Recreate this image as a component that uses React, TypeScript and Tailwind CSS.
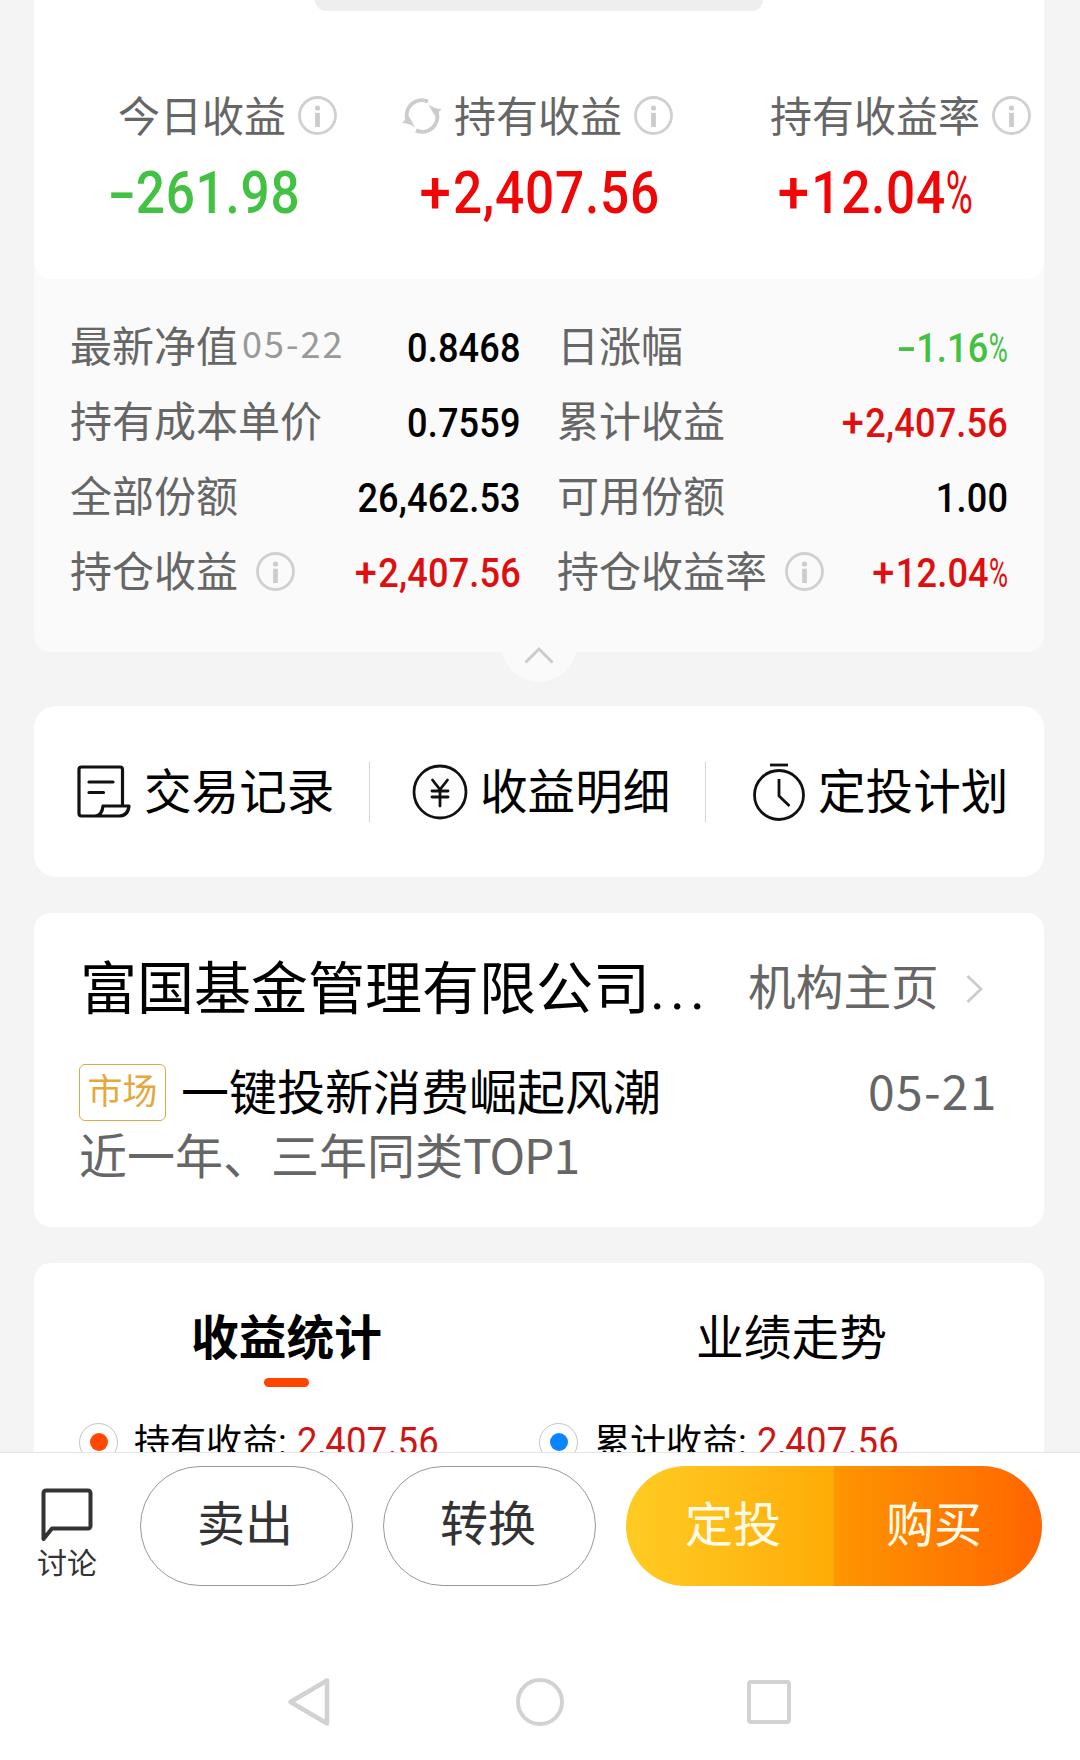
import type { ReactNode } from 'react';
import clsx from 'clsx';

const red = 'text-[#e00f0f]';
const green = 'text-[#43c143]';

const details = [
  { label: '最新净值', date: '05-22', value: '0.8468', color: 'text-black' },
  { label: '日涨幅', value: '-1.16%', color: green },
  { label: '持有成本单价', value: '0.7559', color: 'text-black' },
  { label: '累计收益', value: '+2,407.56', color: red },
  { label: '全部份额', value: '26,462.53', color: 'text-black' },
  { label: '可用份额', value: '1.00', color: 'text-black' },
  { label: '持仓收益', info: true, value: '+2,407.56', color: red },
  { label: '持仓收益率', info: true, value: '+12.04%', color: red },
];

function InfoIcon() {
  return (
    <svg className="h-[39px] w-[39px] shrink-0" viewBox="0 0 39 39" fill="none">
      <circle cx="19.5" cy="19.5" r="18" stroke="#d0d0d0" strokeWidth="2.8" />
      <circle cx="19.5" cy="12" r="2.6" fill="#ccc" />
      <path d="M19.5 16.8V31" stroke="#ccc" strokeWidth="4.8" />
    </svg>
  );
}

function RefreshIcon() {
  return (
    <svg className="h-[36px] w-[40px] shrink-0" viewBox="0 0 40 36" fill="none">
      <path d="M5.5 22A15 15 0 0 1 26 3.6" stroke="#ccc" strokeWidth="4" />
      <path d="M34.5 14A15 15 0 0 1 14 32.4" stroke="#ccc" strokeWidth="4" />
      <path d="M26.5 6.5Q33 11 39.5 11L33 18Q30 13 26.5 6.5Z" fill="#ccc" />
      <path d="M13 29.5Q7 25 0 25L6.5 18Q10 23 13 29.5Z" fill="#ccc" />
    </svg>
  );
}

function RecordIcon() {
  return (
    <svg className="h-[54px] w-[54px] shrink-0" viewBox="0 0 54 54" fill="none" stroke="#111" strokeWidth="3.2" strokeLinejoin="round" strokeLinecap="round">
      <path d="M45.5 41V4.5a2.5 2.5 0 0 0-2.5-2.5H4.5A2.5 2.5 0 0 0 2 4.5V48.5A2.5 2.5 0 0 0 4.5 51H42Q51 51 52 41H26Q25 51 18 51" />
      <path d="M12 17H36M12 27.5H26.5" />
    </svg>
  );
}

function YenIcon() {
  return (
    <svg className="h-[56px] w-[56px] shrink-0" viewBox="0 0 56 56" fill="none" stroke="#111" strokeWidth="2.8" strokeLinecap="round">
      <circle cx="28" cy="28" r="26" />
      <path d="M20.5 16 28 25.5 35.5 16M28 25.5V42M20 27H36M20 33H36" />
    </svg>
  );
}

function TimerIcon() {
  return (
    <svg className="h-[60px] w-[52px] shrink-0" viewBox="0 0 52 60" fill="none" stroke="#111" strokeWidth="2.8">
      <path d="M17 3H35" />
      <circle cx="26" cy="33" r="24.5" />
      <path d="M26 17V34L36.5 44" />
    </svg>
  );
}

// Condensed figures: the sign is drawn wider and the percent mark narrower than the digits.
function Amount({ value, className }: { value: string; className: string }) {
  const sign = /^[+-]/.test(value) ? value[0] : '';
  const percent = value.endsWith('%');
  const digits = value.replace(/[+%-]/g, '');
  return (
    <div className={clsx('scale-x-[0.87] font-[Roboto] font-medium whitespace-nowrap', className)}>
      {sign === '-' && <span className="inline-block w-[0.54em] origin-left scale-x-[1.6]">-</span>}
      {sign === '+' && <span className="inline-block w-[0.65em] origin-left scale-x-[1.1]">+</span>}
      {digits}
      {percent && <span className="inline-block w-[0.54em] origin-left scale-x-[0.72] font-normal">%</span>}
    </div>
  );
}

function Metric({ label, refresh, value, className }: { label: string; refresh?: boolean; value: string; className: string }) {
  return (
    <div className="flex flex-col">
      <div className="flex h-[60px] items-center">
        {refresh && <div className="mr-[12px] -ml-[8px]"><RefreshIcon /></div>}
        <span className="-mt-[5px] text-[42px] leading-[60px] whitespace-nowrap text-[#666]">{label}</span>
        <div className="-mt-px ml-[12px]"><InfoIcon /></div>
      </div>
      <Amount value={value} className={clsx('mt-[17px] origin-left text-[59px] leading-[60px] tracking-[0.015em]', className)} />
    </div>
  );
}

function Shortcut({ icon, label, className }: { icon: ReactNode; label: string; className: string }) {
  return (
    <div className={clsx('flex h-[60px] items-center', className)}>
      {icon}
      <span className="-mt-[5px] text-[47.6px] leading-[60px] text-black">{label}</span>
    </div>
  );
}

function Legend({ dot, label, value, className }: { dot: string; label: string; value: string; className: string }) {
  return (
    <div className={clsx('flex items-center', className)}>
      <div className="flex h-[39px] w-[39px] items-center justify-center rounded-full border border-[#c4c4c4]">
        <div className={clsx('h-[18px] w-[18px] rounded-full', dot)} />
      </div>
      <span className="-mt-[2px] ml-[16px] w-[163px] text-[36px] leading-[40px] whitespace-nowrap text-black">
        {label}<span className="font-[Roboto]">:</span>
      </span>
      <span className="origin-left scale-x-[0.96] font-[Roboto] text-[38px] leading-[40px] tracking-[0.3px] text-[#cc1616]">{value}</span>
    </div>
  );
}

export default function App() {
  return (
    <div className="flex h-[1760px] w-[1080px] flex-col overflow-hidden bg-[#f4f4f4] font-['Noto_Sans_CJK_SC',sans-serif]">
      <main className="h-[1452px] overflow-hidden pr-[36px] pl-[34px]">
        <section className="relative h-[652px] rounded-b-[17px] bg-[#fafafa]">
          <div className="h-[279px] rounded-b-[17px] bg-white">
            <div className="mx-auto h-[11px] w-[448px] rounded-b-[12px] bg-[#eee]" />
            <div className="grid grid-cols-[292px_360px_260px] pt-[75px] pl-[84px]">
              <Metric label="今日收益" value="-261.98" className={clsx('-ml-[10px]', green)} />
              <Metric label="持有收益" refresh value="+2,407.56" className="pl-[11px] text-[#f00606]" />
              <Metric label="持有收益率" value="+12.04%" className="pl-[9px] text-[#f00606]" />
            </div>
          </div>
          <div className="grid grid-cols-[450px_450px] gap-x-[37px] pt-[26px] pl-[36px]">
            {details.map((item) => (
              <div key={item.label} className="flex h-[75px] items-center">
                <span className="mt-[2px] text-[42px] leading-[73px] text-[#666]">{item.label}</span>
                {item.date && <span className="ml-[4px] text-[36px] leading-[75px] tracking-[2px] text-[#999]">{item.date}</span>}
                {item.info && <div className="mt-[8px] ml-[18px]"><InfoIcon /></div>}
                <Amount value={item.value} className={clsx('mt-[10px] -mr-px ml-auto origin-right text-[41.5px] leading-[60px] tracking-[0.005em]', item.color)} />
              </div>
            ))}
          </div>
          <div className="absolute top-[606px] left-[467px] flex h-[76px] w-[76px] items-center justify-center rounded-full bg-[#fafafa]">
            <svg className="mt-[21px] h-[18px] w-[30px]" viewBox="0 0 30 18" fill="none" stroke="#ccc" strokeWidth="3">
              <path d="M1.5 16.5 15 3 28.5 16.5" />
            </svg>
          </div>
        </section>

        <section className="mt-[54px] flex h-[171px] items-center rounded-[22px] bg-white">
          <Shortcut icon={<RecordIcon />} label="交易记录" className="w-[335px] gap-[13px] pl-[43px]" />
          <div className="h-[60px] w-px bg-[#d6d6d6]" />
          <Shortcut icon={<YenIcon />} label="收益明细" className="w-[335px] gap-[12px] pl-[42px]" />
          <div className="h-[60px] w-px bg-[#d6d6d6]" />
          <Shortcut icon={<TimerIcon />} label="定投计划" className="gap-[13px] pl-[47px]" />
        </section>

        <section className="mt-[36px] h-[314px] rounded-[17px] bg-white pt-[36px] pl-[45px]">
          <div className="flex h-[72px] items-center">
            <h2 className="mt-[4px] w-[669px] pl-px text-[57px] leading-[72px] text-black">
              富国基金管理有限公司<span className="font-[Roboto] tracking-[5px]">...</span>
            </h2>
            <span className="text-[47.7px] leading-[72px] text-[#666]">机构主页</span>
            <svg className="mt-[7px] ml-[27px] h-[30px] w-[17px]" viewBox="0 0 17 30" fill="none" stroke="#ccc" strokeWidth="2.8">
              <path d="M1.5 2 15 15 1.5 28" />
            </svg>
          </div>
          <div className="mt-[36px] flex h-[64px] items-center">
            <span className="mt-[6px] h-[57px] w-[87px] rounded-[6px] border-[1.5px] border-[#dcab45] text-center text-[35px] leading-[48px] text-[#e3a93c]">市场</span>
            <span className="ml-[15px] text-[48px] leading-[64px] text-black">一键投新消费崛起风潮</span>
            <span className="ml-[207px] text-[48px] leading-[64px] tracking-[1.3px] text-[#666]">05-21</span>
          </div>
          <p className="text-[48px] leading-[64px] text-[#666]">近一年、三年同类<span className="tracking-[-1px]">TOP1</span></p>
        </section>

        <section className="mt-[36px] h-[260px] rounded-t-[17px] bg-white pt-[42px]">
          <div className="grid grid-cols-2">
            <div className="flex flex-col items-center">
              <span className="text-[47.7px] leading-[60px] font-bold text-black">收益统计</span>
              <div className="mt-[13px] h-[9px] w-[45px] rounded-full bg-[#ff4400]" />
            </div>
            <span className="text-center text-[47.7px] leading-[60px] text-black">业绩走势</span>
          </div>
          <div className="mt-[34px] flex pl-[45px]">
            <Legend dot="bg-[#ff4800]" label="持有收益" value="2,407.56" className="w-[460px]" />
            <Legend dot="bg-[#0a84ff]" label="累计收益" value="2,407.56" className="w-[460px]" />
          </div>
        </section>
      </main>

      <footer className="h-[308px] border-t border-[#e6e6e6] bg-white">
        <div className="flex items-start pt-[13px] pl-[37px]">
          <div className="flex w-[60px] flex-col items-center pt-[22px]">
            <svg className="h-[54px] w-[52px]" viewBox="0 0 52 54" fill="none" stroke="#333" strokeWidth="4" strokeLinejoin="round">
              <path d="M2.5 51V5a2.5 2.5 0 0 1 2.5-2.5H47a2.5 2.5 0 0 1 2.5 2.5V38a2.5 2.5 0 0 1-2.5 2.5H11Z" />
            </svg>
            <span className="mt-px text-[30px] leading-[36px] text-[#333]">讨论</span>
          </div>
          <button className="ml-[43px] h-[120px] w-[213px] rounded-full border border-[#999] pr-[3px] pb-[12px] text-[48px] leading-[60px] text-[#333]">卖出</button>
          <button className="ml-[30px] h-[120px] w-[213px] rounded-full border border-[#999] pr-[3px] pb-[12px] text-[48px] leading-[60px] text-[#333]">转换</button>
          <div className="ml-[30px] flex h-[120px] overflow-hidden rounded-full text-[48px] leading-[60px] text-[#fffbe8]">
            <button className="w-[208px] bg-linear-to-r from-[#ffcc22] to-[#ffab05] pb-[11px] pl-[6px]">定投</button>
            <button className="w-[208px] bg-linear-to-r from-[#ff9500] to-[#ff6400] pr-[8px] pb-[11px]">购买</button>
          </div>
        </div>
        <nav className="mt-[91px] flex items-center pl-[286px]">
          <svg className="h-[50px] w-[44px]" viewBox="0 0 44 50" fill="none" stroke="#d2d2d2" strokeWidth="4.5" strokeLinejoin="round">
            <path d="M41 3.5V46.5L4.5 25Z" />
          </svg>
          <div className="ml-[186px] h-[48px] w-[48px] rounded-full border-[4px] border-[#d2d2d2]" />
          <div className="ml-[183px] h-[44px] w-[44px] rounded-[4px] border-[4px] border-[#d2d2d2]" />
        </nav>
      </footer>
    </div>
  );
}
